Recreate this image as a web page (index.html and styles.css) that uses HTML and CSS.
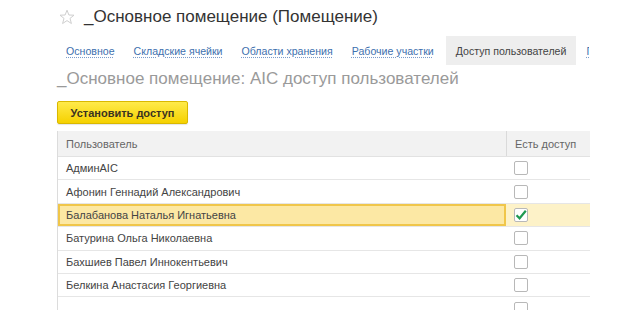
FILE: index.html
```html
<!DOCTYPE html>
<html lang="ru">
<head>
    <meta charset="UTF-8">
    <title>_Основное помещение (Помещение)</title>
    <link rel="stylesheet" href="styles.css">
</head>
<body>
    <div class="page">
        <div class="header">
            <svg class="star" width="16" height="16" viewBox="0 0 16 16">
                <path d="M8 1.2 L9.9 6 L15 6.2 L11 9.4 L12.4 14.5 L8 11.6 L3.6 14.5 L5 9.4 L1 6.2 L6.1 6 Z" fill="none" stroke="#cfcfcf" stroke-width="1"/>
            </svg>
            <h1 class="title">_Основное помещение (Помещение)</h1>
        </div>

        <div class="tabs">
            <a class="tab">Основное</a>
            <a class="tab">Складские ячейки</a>
            <a class="tab">Области хранения</a>
            <a class="tab">Рабочие участки</a>
            <a class="tab active">Доступ пользователей</a>
            <a class="tab">П</a>
        </div>

        <h2 class="subtitle">_Основное помещение: AIC доступ пользователей</h2>

        <button class="btn-yellow">Установить доступ</button>

        <div class="grid">
            <div class="row head">
                <div class="cell">Пользователь</div>
                <div class="cell check-col">Есть доступ</div>
            </div>
            <div class="row">
                <div class="cell">АдминAIC</div>
                <div class="cell check-col"><span class="box"></span></div>
            </div>
            <div class="row">
                <div class="cell">Афонин Геннадий Александрович</div>
                <div class="cell check-col"><span class="box"></span></div>
            </div>
            <div class="row selected">
                <div class="cell">Балабанова Наталья Игнатьевна</div>
                <div class="cell check-col">
                    <span class="box">
                        <svg width="12" height="12" viewBox="0 0 12 12">
                            <path d="M1.5 6.2 L4.6 9.3 L10.8 1.8" fill="none" stroke="#1f9a52" stroke-width="2.2"/>
                        </svg>
                    </span>
                </div>
            </div>
            <div class="row">
                <div class="cell">Батурина Ольга Николаевна</div>
                <div class="cell check-col"><span class="box"></span></div>
            </div>
            <div class="row">
                <div class="cell">Бахшиев Павел Иннокентьевич</div>
                <div class="cell check-col"><span class="box"></span></div>
            </div>
            <div class="row">
                <div class="cell">Белкина Анастасия Георгиевна</div>
                <div class="cell check-col"><span class="box"></span></div>
            </div>
            <div class="row">
                <div class="cell"></div>
                <div class="cell check-col"><span class="box"></span></div>
            </div>
        </div>
    </div>
</body>
</html>
```

FILE: styles.css
```css
* {
    margin: 0;
    padding: 0;
    box-sizing: border-box;
}

body {
    font-family: 'Liberation Sans', Arial, sans-serif;
    background: #fff;
    color: #444;
    overflow: hidden;
}

.page {
    padding-left: 57px;
    width: 590px;
}

.header {
    display: flex;
    align-items: center;
    height: 36px;
    padding-left: 2px;
}

.star {
    margin-right: 9px;
    margin-top: -2px;
}

.title {
    font-size: 17px;
    font-weight: normal;
    color: #333;
    margin-top: -2px;
}

.tabs {
    display: flex;
    gap: 1px;
    width: 532px;
    height: 29px;
    overflow: hidden;
    white-space: nowrap;
}

.tab {
    display: flex;
    align-items: center;
    flex-shrink: 0;
    padding: 0 9px;
    font-size: 10.6px;
    color: #3d6fae;
    text-decoration: underline dotted #7b9ccb;
    text-underline-offset: 2px;
}

.tab.active {
    background: #eeeeee;
    color: #444;
    text-decoration: none;
    margin-left: 2px;
    padding: 0 10px;
}

.subtitle {
    font-size: 17px;
    font-weight: normal;
    color: #9a9a9a;
    height: 36px;
    line-height: 28px;
}

.btn-yellow {
    display: block;
    width: 131px;
    height: 23px;
    font-family: inherit;
    font-size: 11px;
    font-weight: bold;
    color: #3a3320;
    background: linear-gradient(#ffea4a, #f5d100);
    border: 1px solid #d9b800;
    border-radius: 2px;
    box-shadow: 0 1px 1px rgba(0, 0, 0, 0.1);
    margin-bottom: 7px;
}

.grid {
    width: 533px;
    border-left: 1px solid #dcdcdc;
}

.row {
    display: grid;
    grid-template-columns: 448px 84px;
    height: 23.4px;
    border-bottom: 1px solid #e6e6e6;
    font-size: 11px;
}

.row.head {
    height: 26px;
    background: #f2f2f2;
    color: #666;
    border-bottom: 1px solid #e2e2e2;
}

.cell {
    display: flex;
    align-items: center;
    padding-left: 8px;
    white-space: nowrap;
    overflow: hidden;
}

.head .check-col {
    border-left: 1px solid #dadada;
}

.check-col {
    padding-left: 8px;
}

.box {
    display: flex;
    align-items: center;
    justify-content: center;
    width: 14px;
    height: 14px;
    border: 1px solid #b8b8b8;
    border-radius: 2px;
    background: #fff;
}

.row.selected {
    background: #fdf2c8;
}

.row.selected .cell:first-child {
    background: #fce8a4;
    border: 2px solid #f0c64a;
    padding-left: 6px;
}
```
